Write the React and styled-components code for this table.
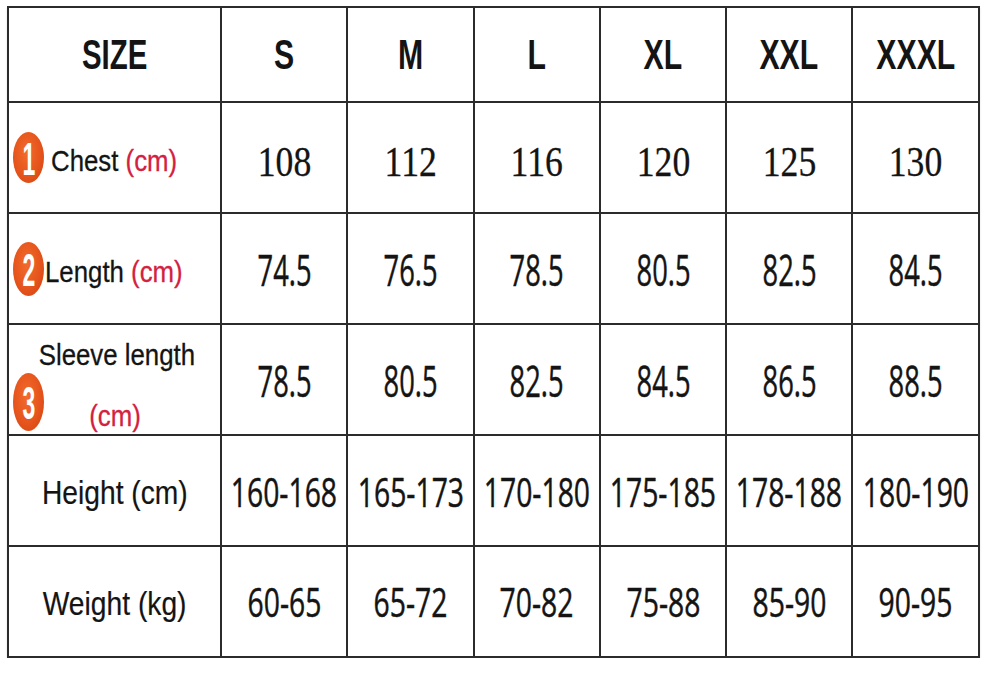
import React from "react";
import styled, { createGlobalStyle } from "styled-components";

const GlobalStyle = createGlobalStyle`
  html, body {
    margin: 0;
    padding: 0;
    background: #ffffff;
  }
  body {
    padding: 6px 0 0 7px;
    font-family: "Liberation Sans", Arial, sans-serif;
    color: #151515;
  }
`;

// size chart grid
const Chart = styled.table`
  border-collapse: collapse;
  table-layout: fixed;
  width: 971px;
  box-shadow: 0 2px 2px rgba(0, 0, 0, 0.12);

  td, th {
    border: 2px solid #2b2b2b;
    padding: 0;
    vertical-align: middle;
    white-space: nowrap;
  }
`;

const HeadRow = styled.tr`
  height: 95px;
`;

const Row = styled.tr`
  height: 111px;
`;

// centres its text even when the unscaled box is wider than the cell
const Center = styled.div`
  display: flex;
  justify-content: center;
  align-items: center;
`;

// narrow text: the chart is a squeezed picture, so glyphs get condensed
const Squeeze = styled.span`
  display: inline-block;
  flex: none;
  font-family: ${(p) => (p.$serif ? '"Liberation Serif", "Times New Roman", serif' : p.$open ? '"Open Sans", "Liberation Sans", sans-serif' : '"Liberation Sans", Arial, sans-serif')};
  font-size: ${(p) => p.$size || 30}px;
  font-weight: ${(p) => p.$weight || 400};
  color: #141414;
  transform: scaleX(${(p) => p.$sx || 0.8});
  transform-origin: ${(p) => p.$origin || "center"};
  line-height: 1;
  margin-top: ${(p) => p.$dy || 0}px;
  -webkit-text-stroke: ${(p) => p.$stroke || 0}px #141414;
`;

const Red = styled.span`
  color: #d3213f;
  -webkit-text-stroke: 0.3px #d3213f;
`;

const LabelCell = styled.div`
  display: flex;
  align-items: center;
  padding-left: 4px;
  gap: ${(p) => p.$gap || 4}px;
`;

const Badge = styled.span`
  display: inline-flex;
  flex: none;
  align-items: center;
  justify-content: center;
  width: 31px;
  height: ${(p) => p.$h || 50}px;
  border-radius: 50%;
  background: radial-gradient(ellipse at 45% 40%, #f26c2c 0%, #e4521b 60%, #c8400f 100%);
  color: #ffffff;
  font-family: "Liberation Sans", Arial, sans-serif;
  font-weight: 700;
  font-size: 46px;
  line-height: 1;

  span {
    display: inline-block;
    transform: scaleX(0.5);
    margin-top: 2px;
  }
`;

const SleeveCell = styled.div`
  display: flex;
  flex-direction: column;
  padding: 12px 0 1px 4px;
  height: 100%;
  box-sizing: border-box;
`;

const SleeveBottom = styled.div`
  display: grid;
  grid-template-columns: 1fr auto 1fr;
  align-items: end;
  margin-top: 3px;
  padding-right: 4px;
`;

const sizes = ["S", "M", "L", "XL", "XXL", "XXXL"];
const chest = ["108", "112", "116", "120", "125", "130"];
const length = ["74.5", "76.5", "78.5", "80.5", "82.5", "84.5"];
const sleeve = ["78.5", "80.5", "82.5", "84.5", "86.5", "88.5"];
const height = ["160-168", "165-173", "170-180", "175-185", "178-188", "180-190"];
const weight = ["60-65", "65-72", "70-82", "75-88", "85-90", "90-95"];

const App = () => {
  return (
    <>
      <GlobalStyle />
      <Chart>
        <colgroup>
          <col style={{ width: 213 }} />
          {sizes.map((s) => (
            <col key={s} style={{ width: 126.3 }} />
          ))}
        </colgroup>
        <tbody>
          <HeadRow>
            <th>
              <Center>
                <Squeeze $size={42} $weight={700} $sx={0.7}>SIZE</Squeeze>
              </Center>
            </th>
            {sizes.map((s) => (
              <th key={s}>
                <Center>
                  <Squeeze $size={42} $weight={700} $sx={0.72}>{s}</Squeeze>
                </Center>
              </th>
            ))}
          </HeadRow>

          <Row>
            <td>
              <LabelCell $gap={7}>
                <Badge $h={51}><span>1</span></Badge>
                <Squeeze $size={30} $sx={0.86} $origin="left" $dy={6} $stroke={0.3}>
                  Chest <Red>(cm)</Red>
                </Squeeze>
              </LabelCell>
            </td>
            {chest.map((v, i) => (
              <td key={i}>
                <Center>
                  <Squeeze $serif $size={42} $sx={0.85} $dy={8} $stroke={0.3}>{v}</Squeeze>
                </Center>
              </td>
            ))}
          </Row>

          <Row>
            <td>
              <LabelCell $gap={1}>
                <Badge $h={54}><span>2</span></Badge>
                <Squeeze $size={30} $sx={0.86} $origin="left" $dy={6} $stroke={0.3}>
                  Length <Red>(cm)</Red>
                </Squeeze>
              </LabelCell>
            </td>
            {length.map((v, i) => (
              <td key={i}>
                <Center>
                  <Squeeze $open $size={44} $weight={500} $sx={0.62} $stroke={0.5}>{v}</Squeeze>
                </Center>
              </td>
            ))}
          </Row>

          <Row>
            <td>
              <SleeveCell>
                <Center>
                  <Squeeze $size={30} $sx={0.86} $stroke={0.3}>Sleeve length</Squeeze>
                </Center>
                <SleeveBottom>
                  <Badge $h={58}><span>3</span></Badge>
                  <Squeeze $size={30} $sx={0.86} $stroke={0.3}><Red>(cm)</Red></Squeeze>
                </SleeveBottom>
              </SleeveCell>
            </td>
            {sleeve.map((v, i) => (
              <td key={i}>
                <Center>
                  <Squeeze $open $size={44} $weight={500} $sx={0.62} $stroke={0.5}>{v}</Squeeze>
                </Center>
              </td>
            ))}
          </Row>

          <Row>
            <td>
              <Center>
                <Squeeze $size={34} $sx={0.83} $dy={2} $stroke={0.2}>Height (cm)</Squeeze>
              </Center>
            </td>
            {height.map((v, i) => (
              <td key={i}>
                <Center>
                  <Squeeze $open $size={41} $weight={500} $sx={0.69} $dy={2} $stroke={0.5}>{v}</Squeeze>
                </Center>
              </td>
            ))}
          </Row>

          <Row>
            <td>
              <Center>
                <Squeeze $size={34} $sx={0.83} $dy={2} $stroke={0.2}>Weight (kg)</Squeeze>
              </Center>
            </td>
            {weight.map((v, i) => (
              <td key={i}>
                <Center>
                  <Squeeze $open $size={41} $weight={500} $sx={0.69} $stroke={0.5}>{v}</Squeeze>
                </Center>
              </td>
            ))}
          </Row>
        </tbody>
      </Chart>
    </>
  );
};

export default App;
